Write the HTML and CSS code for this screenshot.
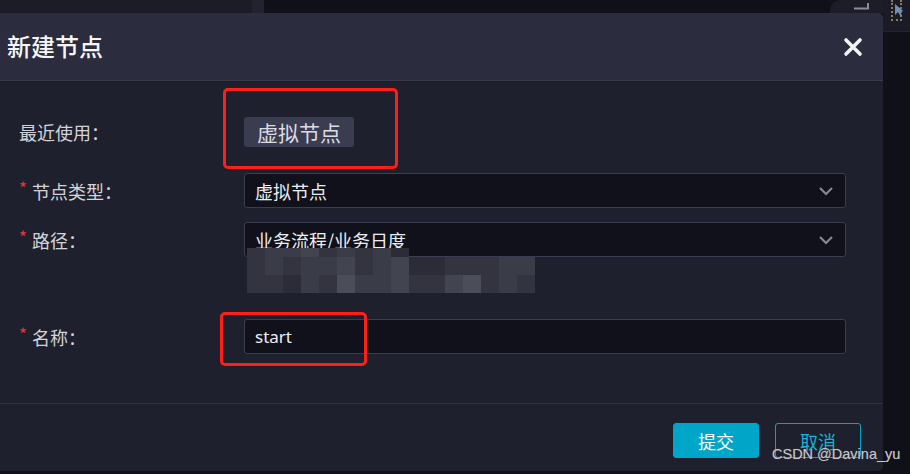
FILE: index.html
```html
<!DOCTYPE html>
<html lang="zh">
<head>
<meta charset="utf-8">
<title>新建节点</title>
<link rel="stylesheet" href="styles.css">
</head>
<body>
<div class="screen">
  <div class="main-col">
    <div class="topstrip">
      <div class="seg seg-a"></div>
      <div class="seg seg-b"></div>
      <div class="seg seg-c"></div>
      <div class="seg seg-d">
        <svg class="tb-icon" width="20" height="8" viewBox="0 0 20 8"><path d="M2 6.5H16V1" fill="none" stroke="#8a8c99" stroke-width="2"/></svg>
      </div>
    </div>
    <div class="modal">
      <div class="modal-header">
        <h1 class="modal-title">新建节点</h1>
        <svg class="close" width="20" height="20" viewBox="0 0 20 20"><path d="M3 3L17 17M17 3L3 17" stroke="#f4f4f6" stroke-width="3.6" stroke-linecap="round"/></svg>
      </div>
      <div class="modal-body">
        <div class="row row-recent">
          <div class="label">最近使用：</div>
          <div class="control">
            <span class="tag">虚拟节点</span>
          </div>
          <div class="mark mark-1"></div>
        </div>
        <div class="row row-field">
          <div class="label"><span class="req">*</span>节点类型：</div>
          <div class="control">
            <div class="select">
              <span class="val">虚拟节点</span>
              <svg class="chev" width="16" height="10" viewBox="0 0 16 10"><path d="M2 2L8 8L14 2" fill="none" stroke="#868899" stroke-width="2.2"/></svg>
            </div>
          </div>
        </div>
        <div class="row row-field row-path">
          <div class="label"><span class="req">*</span>路径：</div>
          <div class="control">
            <div class="select">
              <span class="val">业务流程/业务日度</span>
              <svg class="chev" width="16" height="10" viewBox="0 0 16 10"><path d="M2 2L8 8L14 2" fill="none" stroke="#868899" stroke-width="2.2"/></svg>
            </div>
            <div class="mosaic">
              <div class="mrow mrow-top">
                <i class="m2"></i><i class="m3"></i><i class="m3"></i><i class="m4"></i><i class="m2"></i><i class="m3"></i><i class="m2"></i><i class="m3"></i><i class="m1"></i>
              </div>
              <div class="mrow">
                <i class="m2"></i><i class="m3"></i><i class="m2"></i><i class="m3"></i><i class="m3"></i><i class="m4"></i><i class="m2"></i><i class="m3"></i><i class="m4"></i><i class="m1"></i><i class="m1"></i><i class="m2"></i><i class="m2"></i><i class="m2"></i><i class="m3"></i><i class="m3"></i>
              </div>
              <div class="mrow">
                <i class="m2"></i><i class="m2"></i><i class="m1"></i><i class="m3"></i><i class="m2"></i><i class="m5"></i><i class="m3"></i><i class="m3"></i><i class="m4"></i><i class="m2"></i><i class="m2"></i><i class="m4"></i><i class="m5"></i><i class="m2"></i><i class="m3"></i><i class="m2"></i>
              </div>
            </div>
          </div>
        </div>
        <div class="row row-field row-name">
          <div class="label"><span class="req">*</span>名称：</div>
          <div class="control">
            <div class="input"><span class="val">start</span></div>
          </div>
          <div class="mark mark-2"></div>
        </div>
      </div>
      <div class="modal-footer">
        <button class="btn btn-primary">提交</button>
        <button class="btn btn-ghost">取消</button>
      </div>
    </div>
  </div>
  <div class="side-col">
    <div class="side-top">
      <div class="dashbox">
        <svg class="cursor" width="10" height="14" viewBox="0 0 10 14"><path d="M1 1L1 12L4 9L6.5 13.5L8 12.5L5.8 8.3L9.5 8.3Z" fill="#6f8fb8"/></svg>
      </div>
    </div>
  </div>
  <div class="watermark">CSDN @Davina_yu</div>
</div>
</body>
</html>
```

FILE: styles.css
```css
* { box-sizing: border-box; }
html, body { margin: 0; padding: 0; }
body {
  width: 910px;
  height: 474px;
  overflow: hidden;
  background: #0f1018;
  font-family: "Noto Sans CJK SC", "Noto Sans", sans-serif;
}
.screen { display: flex; width: 910px; height: 474px; position: relative; }
.main-col { width: 883px; display: flex; flex-direction: column; }
.side-col { width: 27px; display: flex; flex-direction: column; }

.topstrip { height: 13px; display: flex; }
.seg { height: 13px; }
.seg-a { width: 252px; background: #1b1c27; }
.seg-b { width: 12px; background: #22232f; }
.seg-c { flex: 1; background: #0f1018; }
.seg-d { width: 53px; background: #1c1d28; border-top-left-radius: 10px; position: relative; }
.tb-icon { position: absolute; left: 22px; top: 2px; }

.side-top { height: 32px; background: #1a1b26; border-bottom: 1px solid #23243a; position: relative; }
.dashbox {
  position: absolute; left: 8px; top: 0; width: 11px; height: 21px;
  border: 2px dotted #8a7c5a; border-top: none;
}
.cursor { position: absolute; left: 1px; top: 3px; }

.modal {
  flex: 1;
  margin-bottom: 3px;
  background: #1f202d;
  border-radius: 0 5px 5px 0;
  display: flex;
  flex-direction: column;
  position: relative;
  overflow: hidden;
}
.modal-header {
  height: 68px;
  background: #2b2d3e;
  border-bottom: 1px solid #3a3c4e;
  display: flex;
  align-items: center;
  justify-content: space-between;
  padding: 0 20px 0 7px;
}
.modal-title {
  margin: 0;
  font-size: 24px;
  font-weight: 500;
  color: #f6f6f8;
  line-height: 1;
  margin-top: -2px;
}

.modal-body {
  height: 323px;
  border-bottom: 1px solid #30323f;
  padding-top: 36px;
}
.row { display: flex; align-items: center; padding-left: 19px; position: relative; }
.label {
  width: 225px;
  font-size: 18px;
  color: #d3d4db;
  display: flex;
  align-items: center;
}
.req { color: #e0393e; font-size: 17px; margin-right: 5px; margin-top: 0; align-self: flex-start; line-height: 20px; }
.control { width: 602px; position: relative; }

.row-recent { height: 30px; }
.tag {
  display: inline-flex;
  align-items: center;
  height: 30px;
  padding: 0 13px 1px 13px;
  background: #3a3c50;
  border-radius: 3px;
  font-size: 21px;
  color: #dcdce4;
}
.row-field { margin-top: 26px; height: 35px; }
.row-path { margin-top: 14px; }
.row-name { margin-top: 62px; }

.select, .input {
  height: 35px;
  background: #10111a;
  border: 1px solid #3b3d52;
  border-radius: 3px;
  display: flex;
  align-items: center;
  justify-content: space-between;
  padding: 0 11px 0 10px;
}
.val { font-size: 18px; color: #eceef2; }
.input .val { font-family: "Noto Sans", sans-serif; font-size: 17px; }
.chev { margin-top: 1px; }

.mosaic {
  position: absolute;
  left: 3px;
  top: 26px;
  width: 288px;
  display: flex;
  flex-direction: column;
}
.mrow { display: flex; height: 18px; }
.mrow-top { height: 9px; }
.mrow i { width: 18px; height: 100%; display: block; }
.m1 { background: #2b2c37; }
.m2 { background: #33343f; }
.m3 { background: #3a3c47; }
.m4 { background: #42444f; }
.m5 { background: #4b4d58; }

.mark {
  position: absolute;
  border: 3px solid #ff1f1a;
  border-radius: 5px;
}
.mark-1 { left: 223px; top: -29px; width: 175px; height: 81px; }
.mark-2 { left: 220px; top: -7px; width: 147px; height: 54px; }

.modal-footer {
  display: flex;
  justify-content: flex-end;
  gap: 16px;
  padding: 19px 22px 0 0;
}
.btn {
  width: 86px;
  height: 35px;
  border-radius: 3px;
  font-family: "Noto Sans CJK SC", sans-serif;
  font-size: 18px;
  padding: 0;
}
.btn-primary { background: #00a6c8; border: 1px solid #00a6c8; color: #ffffff; }
.btn-ghost { background: transparent; border: 1px solid #00a6c8; color: #14b4d4; }

.watermark {
  position: absolute;
  left: 772px;
  top: 446px;
  white-space: nowrap;
  font-family: "Liberation Sans", Arial, sans-serif;
  font-size: 14.5px;
  color: #c8c8cc;
  text-shadow: 0 0 1px #555;
}
```
